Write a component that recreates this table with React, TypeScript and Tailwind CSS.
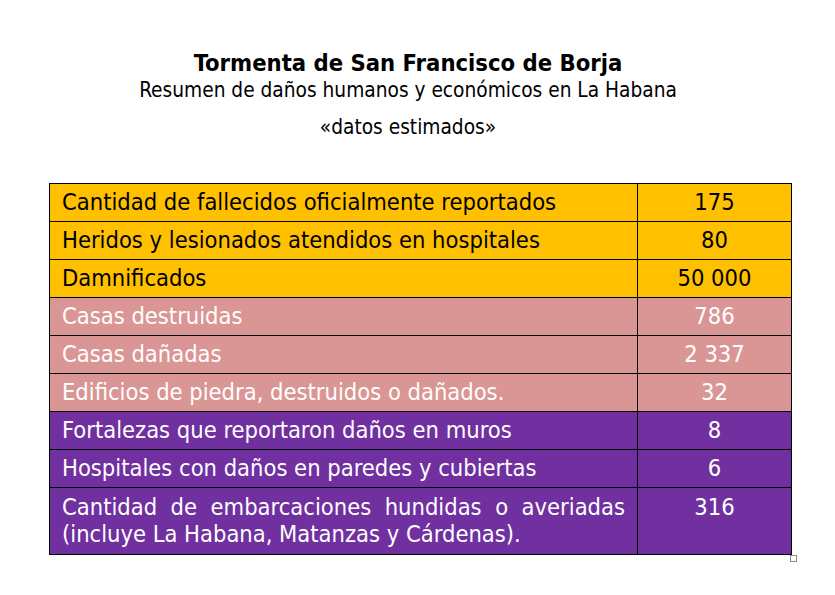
import React from "react";

type Row = { label: string; value: string; tone: "gold" | "rose" | "violet"; tall?: boolean };

const rows: Row[] = [
  { label: "Cantidad de fallecidos oficialmente reportados", value: "175", tone: "gold" },
  { label: "Heridos y lesionados atendidos en hospitales", value: "80", tone: "gold" },
  { label: "Damnificados", value: "50 000", tone: "gold" },
  { label: "Casas destruidas", value: "786", tone: "rose" },
  { label: "Casas dañadas", value: "2 337", tone: "rose" },
  { label: "Edificios de piedra, destruidos o dañados.", value: "32", tone: "rose" },
  { label: "Fortalezas que reportaron daños en muros", value: "8", tone: "violet" },
  { label: "Hospitales con daños en paredes y cubiertas", value: "6", tone: "violet" },
  {
    label: "Cantidad de embarcaciones hundidas o averiadas (incluye La Habana, Matanzas y Cárdenas).",
    value: "316",
    tone: "violet",
    tall: true
  }
];

const toneClass = {
  gold: "bg-[#ffc000] text-black",
  rose: "bg-[#da9694] text-white",
  violet: "bg-[#7030a0] text-white"
};

const App = () => {
  return (
    <div
      className="relative w-[835px] h-[595px] bg-white overflow-hidden"
      style={{ fontFamily: '"DejaVu Sans Condensed", "DejaVu Sans", sans-serif' }}
    >
      {/* Heading */}
      <div className="w-[816px] pt-[50px] text-center text-black">
        <h1 className="text-[23.6px] leading-[27px] font-bold">Tormenta de San Francisco de Borja</h1>
        <p className="text-[20.7px] leading-[26px]">Resumen de daños humanos y económicos en La Habana</p>
        <p className="mt-[11px] text-[20.7px] leading-[26px]">«datos estimados»</p>
      </div>

      {/* Table */}
      <table className="absolute left-[49px] top-[183px] border-collapse text-[23.5px] leading-[27px]">
        <tbody>
          {rows.map((row, i) => (
            <tr key={i} className={toneClass[row.tone]}>
              <td
                className={
                  row.tall
                    ? "w-[588px] h-[67px] border border-black px-[12px] pt-[6px] pb-[6px] align-top text-justify"
                    : "w-[588px] h-[38px] border border-black px-[12px] py-0 align-middle"
                }
              >
                {row.label}
              </td>
              <td
                className={
                  row.tall
                    ? "w-[154px] border border-black pt-[6px] align-top text-center"
                    : "w-[154px] border border-black align-middle text-center"
                }
              >
                {row.value}
              </td>
            </tr>
          ))}
        </tbody>
      </table>

      {/* resize handle */}
      <div className="absolute left-[790px] top-[555px] w-[7px] h-[7px] border border-[#8c8c8c] bg-white" />
    </div>
  );
};

export default App;
